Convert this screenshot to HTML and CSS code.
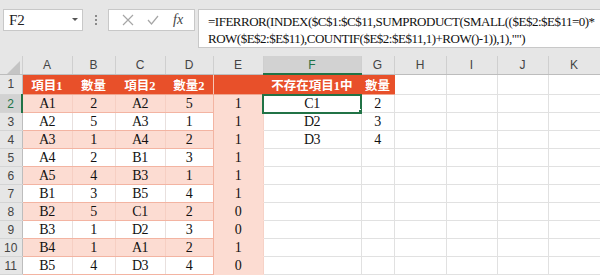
FILE: index.html
```html
<!DOCTYPE html>
<html lang="zh-Hant">
<head>
    <meta charset="UTF-8" />
    <title>Sheet</title>
    <link rel="stylesheet" href="styles.css">
</head>
<body>

<div class="toolbar">
    <div class="namebox">
        <span>F2</span>
        <svg class="caret" width="6" height="4" viewBox="0 0 6 4"><polygon points="0,0 6,0 3,3" fill="#555"/></svg>
    </div>
    <div class="grip"><i></i><i></i><i></i></div>
    <div class="btnbox">
        <svg width="12" height="12" viewBox="0 0 12 12"><path d="M1 1 L11 11 M11 1 L1 11" stroke="#a6a6a6" stroke-width="1.2" fill="none"/></svg>
        <svg width="12" height="12" viewBox="0 0 12 12"><path d="M1 6 L4.5 10 L11 2" stroke="#a6a6a6" stroke-width="1.2" fill="none"/></svg>
        <span class="fx">fx</span>
    </div>
    <div class="formula">=IFERROR(INDEX($C$1:$C$11,SUMPRODUCT(SMALL(($E$2:$E$11=0)*<br>ROW($E$2:$E$11),COUNTIF($E$2:$E$11,1)+ROW()-1)),1),"")</div>
</div>

<table class="sheet">
    <colgroup>
        <col style="width:22px"><col style="width:50px"><col style="width:43px"><col style="width:50px">
        <col style="width:48px"><col style="width:50px"><col style="width:98px"><col style="width:33px">
        <col style="width:52px"><col style="width:51px"><col style="width:51px"><col style="width:52px">
    </colgroup>
    <tr class="colhead">
        <th class="corner"><svg width="13" height="13" viewBox="0 0 13 13"><polygon points="13,0 13,13 0,13" fill="#c4c4c4"/></svg></th>
        <th>A</th><th>B</th><th>C</th><th>D</th><th>E</th><th class="sel">F</th><th>G</th><th>H</th><th>I</th><th>J</th><th>K</th>
    </tr>
    <tr>
        <th class="rh">1</th>
        <td class="hd">項目1</td><td class="hd">數量</td><td class="hd">項目2</td><td class="hd dend">數量2</td>
        <td class="hd"></td><td class="hd">不存在項目1中</td><td class="hd">數量</td>
        <td></td><td></td><td></td><td></td>
    </tr>
    <tr class="pink">
        <th class="rh on">2</th>
        <td>A1</td><td>2</td><td>A2</td><td class="dend">5</td><td class="e">1</td>
        <td class="active">C1</td><td>2</td><td></td><td></td><td></td><td></td>
    </tr>
    <tr class="plain">
        <th class="rh">3</th>
        <td>A2</td><td>5</td><td>A3</td><td class="dend">1</td><td class="e">1</td>
        <td>D2</td><td>3</td><td></td><td></td><td></td><td></td>
    </tr>
    <tr class="pink">
        <th class="rh">4</th>
        <td>A3</td><td>1</td><td>A4</td><td class="dend">2</td><td class="e">1</td>
        <td>D3</td><td>4</td><td></td><td></td><td></td><td></td>
    </tr>
    <tr class="plain">
        <th class="rh">5</th>
        <td>A4</td><td>2</td><td>B1</td><td class="dend">3</td><td class="e">1</td>
        <td></td><td></td><td></td><td></td><td></td><td></td>
    </tr>
    <tr class="pink">
        <th class="rh">6</th>
        <td>A5</td><td>4</td><td>B3</td><td class="dend">1</td><td class="e">1</td>
        <td></td><td></td><td></td><td></td><td></td><td></td>
    </tr>
    <tr class="plain">
        <th class="rh">7</th>
        <td>B1</td><td>3</td><td>B5</td><td class="dend">4</td><td class="e">1</td>
        <td></td><td></td><td></td><td></td><td></td><td></td>
    </tr>
    <tr class="pink">
        <th class="rh">8</th>
        <td>B2</td><td>5</td><td>C1</td><td class="dend">2</td><td class="e">0</td>
        <td></td><td></td><td></td><td></td><td></td><td></td>
    </tr>
    <tr class="plain">
        <th class="rh">9</th>
        <td>B3</td><td>1</td><td>D2</td><td class="dend">3</td><td class="e">0</td>
        <td></td><td></td><td></td><td></td><td></td><td></td>
    </tr>
    <tr class="pink">
        <th class="rh">10</th>
        <td>B4</td><td>1</td><td>A1</td><td class="dend">2</td><td class="e">1</td>
        <td></td><td></td><td></td><td></td><td></td><td></td>
    </tr>
    <tr class="plain">
        <th class="rh">11</th>
        <td>B5</td><td>4</td><td>D3</td><td class="dend">4</td><td class="e">0</td>
        <td></td><td></td><td></td><td></td><td></td><td></td>
    </tr>
</table>

</body>
</html>
```

FILE: styles.css
```css
body {
    margin: 0;
    width: 600px;
    height: 275px;
    overflow: hidden;
    background-color: #ffffff;
    font-family: "Liberation Serif", "Noto Sans CJK TC", serif;
}
.toolbar {
    height: 56px;
    background-color: #e6e6e6;
    display: flex;
    align-items: flex-start;
    padding-top: 9px;
    box-sizing: border-box;
}
.namebox {
    margin-left: 3px;
    width: 80px;
    height: 22px;
    box-sizing: border-box;
    background-color: #fff;
    border: 1px solid #c8c8c8;
    display: flex;
    align-items: center;
    justify-content: space-between;
    padding: 0 4px 0 5px;
    font-family: "Liberation Serif", serif;
    font-size: 15px;
    color: #222;
}
.grip {
    width: 25px;
    display: flex;
    flex-direction: column;
    align-items: center;
    gap: 2px;
    padding-top: 6px;
}
.grip i {
    width: 2px;
    height: 2px;
    background-color: #8a8a8a;
}
.btnbox {
    width: 87px;
    height: 22px;
    box-sizing: border-box;
    background-color: #fff;
    border: 1px solid #c8c8c8;
    display: flex;
    align-items: center;
    justify-content: space-around;
    padding: 0 4px 0 6px;
}
.fx {
    font-style: italic;
    font-size: 14px;
    color: #444;
}
.formula {
    margin-left: 3px;
    flex: 1;
    height: 39px;
    box-sizing: border-box;
    background-color: #fff;
    border: 1px solid #c8c8c8;
    border-right: none;
    padding: 3px 0 0 9px;
    font-size: 13px;
    line-height: 17px;
    letter-spacing: -0.5px;
    white-space: nowrap;
    overflow: hidden;
    color: #111;
}
.sheet {
    border-collapse: collapse;
    table-layout: fixed;
    width: 600px;
}
.sheet th, .sheet td {
    height: 17px;
    padding: 0;
    text-align: center;
    overflow: hidden;
    white-space: nowrap;
}
.sheet td {
    font-size: 14px;
    letter-spacing: -0.5px;
    color: #111;
    border-right: 1px solid #e1e1e1;
    border-bottom: 1px solid #e1e1e1;
}
.colhead th {
    background-color: #e6e6e6;
    font-family: "Liberation Sans", Arial, sans-serif;
    font-weight: normal;
    font-size: 12px;
    color: #444;
    border-right: 1px solid #cfcfcf;
    border-bottom: 1px solid #bdbdbd;
}
.colhead th.corner {
    text-align: right;
    vertical-align: bottom;
    line-height: 0;
    padding-right: 2px;
}
.colhead th.sel {
    background-color: #d2d2d2;
    color: #217346;
    border-bottom: 2px solid #217346;
}
.rh {
    background-color: #e6e6e6;
    font-family: "Liberation Sans", Arial, sans-serif;
    font-weight: normal;
    font-size: 12px;
    color: #444;
    border-right: 1px solid #bdbdbd;
    border-bottom: 1px solid #d4d4d4;
}
.rh.on {
    background-color: #d2d2d2;
    color: #217346;
    border-right: 2px solid #217346;
}
.sheet td.hd {
    background-color: #e8502a;
    color: #fff;
    font-size: 12.5px;
    letter-spacing: 0;
    font-weight: bold;
    border-right-color: #e8502a;
    border-bottom-color: #f0a58f;
}
.sheet td.hd.dend {
    border-right-color: #f6c7b8;
}
.pink td {
    background-color: #fcdcd2;
}
.pink td, .plain td {
    border-bottom-color: #f3b4a2;
    border-right-color: #f6cfc3;
}
.plain td {
    border-right-color: #e8e0de;
}
.pink td:nth-child(n+7), .plain td:nth-child(n+7) {
    background-color: #fff;
    border-bottom-color: #e1e1e1;
    border-right-color: #e1e1e1;
}
.sheet td.dend {
    border-right-color: #f3b4a2;
}
.sheet td.e {
    background-color: #fcdcd2;
    border-bottom-color: #fcdcd2;
    border-right-color: #f6d2c7;
}
.sheet td.active {
    position: relative;
    outline: 2px solid #217346;
    outline-offset: -1px;
}
.sheet td.active::after {
    content: "";
    position: absolute;
    right: -3px;
    bottom: -3px;
    width: 4px;
    height: 4px;
    background-color: #217346;
    border: 1px solid #fff;
}
```
